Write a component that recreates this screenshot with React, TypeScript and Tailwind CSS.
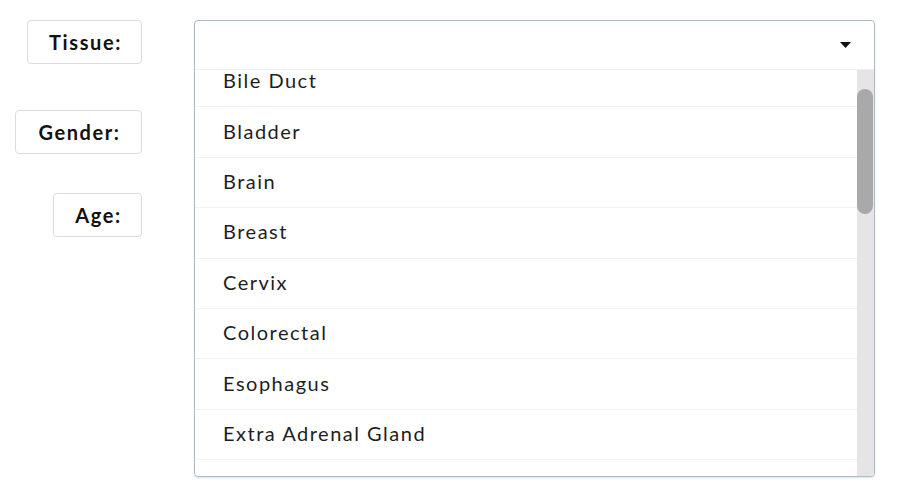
const tissues = [
  "Bile Duct",
  "Bladder",
  "Brain",
  "Breast",
  "Cervix",
  "Colorectal",
  "Esophagus",
  "Extra Adrenal Gland",
];

function Label({ text, className }: { text: string; className?: string }) {
  return (
    <div
      className={
        "flex h-[44px] items-center justify-center rounded-[4px] border border-[#dcdcdc] bg-white pl-[2px] text-[20px] font-bold tracking-[1.6px] text-[#111] " +
        (className ?? "")
      }
    >
      {text}
    </div>
  );
}

export default function App() {
  return (
    <div className="h-[486px] w-[899px] bg-white font-['Lato','Liberation_Sans',sans-serif]">
      <div className="flex pt-[20px]">
        {/* labels */}
        <div className="flex w-[142px] flex-col items-end">
          <Label text="Tissue:" className="w-[115px]" />
          <Label text="Gender:" className="mt-[46px] w-[127px]" />
          <Label text="Age:" className="mt-[39px] w-[89px]" />
        </div>

        {/* select */}
        <div className="ml-[52px] flex h-[457px] w-[681px] flex-col overflow-hidden rounded-[4px] border border-[#a9bccb] bg-white shadow-[0_1px_2px_rgba(0,0,0,0.12)]">
          <div className="flex h-[49px] shrink-0 items-center justify-end border-b border-[#f0f0f0] pr-[23px]">
            <svg width="11" height="6" viewBox="0 0 11 6">
              <path d="M0 0 H11 L5.5 6 Z" fill="#111" />
            </svg>
          </div>
          <div className="flex min-h-0 flex-1">
            <div className="min-w-0 flex-1 overflow-hidden">
              <div className="-mt-[13px]">
                {tissues.map((t) => (
                  <div
                    key={t}
                    className="flex h-[50.4px] items-center border-b border-[#f1f1f1] pb-[3px] pl-[28px] text-[20px] tracking-[1.5px] text-[#1e1e1e]"
                  >
                    {t}
                  </div>
                ))}
              </div>
            </div>
            <div className="w-[17px] shrink-0 bg-[#e6e4e6] pt-[19px]">
              <div className="h-[125px] w-[16px] rounded-full bg-[#a9a9a9]" />
            </div>
          </div>
        </div>
      </div>
    </div>
  );
}
